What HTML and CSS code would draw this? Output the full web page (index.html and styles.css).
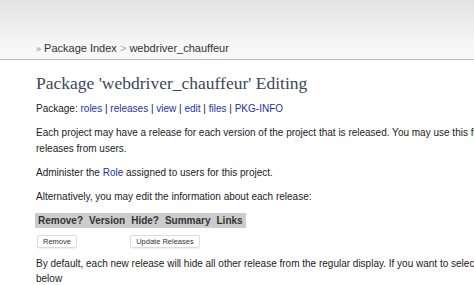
FILE: index.html
```html
<!DOCTYPE html>
<html lang="en">
<head>
    <meta charset="UTF-8">
    <title>Package 'webdriver_chauffeur' Editing</title>
    <link rel="stylesheet" href="styles.css">
</head>
<body>

<div class="header">
    <div class="breadcrumb">
        <span class="raquo">&raquo;</span> <a href="#">Package Index</a> <span class="sep">&gt;</span> <a href="#">webdriver_chauffeur</a>
    </div>
</div>

<div class="content">
    <h1>Package 'webdriver_chauffeur' Editing</h1>

    <p>Package: <a class="link" href="#">roles</a> | <a class="link" href="#">releases</a> | <a class="link" href="#">view</a> | <a class="link" href="#">edit</a> | <a class="link" href="#">files</a> | <a class="link" href="#">PKG-INFO</a></p>

    <p>Each project may have a release for each version of the project that is released. You may use this form to hide releases from users.</p>

    <p>Administer the <a class="link" href="#">Role</a> assigned to users for this project.</p>

    <p>Alternatively, you may edit the information about each release:</p>

    <table class="releases">
        <tr>
            <th>Remove?</th>
            <th>Version</th>
            <th>Hide?</th>
            <th>Summary</th>
            <th>Links</th>
        </tr>
        <tr>
            <td><button>Remove</button></td>
            <td></td>
            <td colspan="3"><button>Update Releases</button></td>
        </tr>
    </table>

    <p class="wide">By default, each new release will hide all other release from the regular display. If you want to select which releases are hidden, uncheck the box below</p>
</div>

</body>
</html>
```

FILE: styles.css
```css
body {
    margin: 0;
    font-family: "Liberation Sans", Arial, sans-serif;
    color: #222;
    background: #fff;
    overflow: hidden;
}
.header {
    height: 60px;
    background: linear-gradient(#e3e3e3, #f6f6f6 75%, #f9f9f9);
    border-bottom: 1px solid #bcbcbc;
    box-sizing: border-box;
    padding: 40px 0 0 36px;
}
.breadcrumb {
    font-size: 11px;
    line-height: 16px;
    color: #333;
}
.breadcrumb a {
    color: #333;
    text-decoration: none;
}
.breadcrumb .raquo {
    color: #888;
    font-size: 9px;
}
.breadcrumb .sep {
    color: #aaa;
}
.content {
    padding: 0 0 0 36px;
    width: 700px;
}
h1 {
    font-family: "Liberation Serif", Georgia, serif;
    font-weight: normal;
    font-size: 17.5px;
    line-height: 20px;
    color: #3a4859;
    margin: 13px 0 8px;
}
p {
    font-size: 10px;
    line-height: 16px;
    margin: 0 0 8px;
    width: 505px;
}
p.wide {
    width: 660px;
    line-height: 15px;
}
a.link {
    color: #2232a8;
    text-decoration: none;
}
table.releases {
    border-collapse: collapse;
    margin: 0 0 8px -1px;
}
table.releases th {
    background: #cccccc;
    font-size: 10px;
    line-height: 13px;
    text-align: left;
    padding: 1px 3px;
    color: #333;
}
table.releases td {
    padding: 2px 2px 0;
}
button {
    font-family: "Liberation Sans", Arial, sans-serif;
    font-size: 7.5px;
    line-height: 9px;
    background: #fff;
    border: 1px solid #dcdcdc;
    border-radius: 2px;
    box-shadow: 0 1px 1px rgba(0,0,0,0.06);
    padding: 1px 5px;
    color: #333;
}
```
